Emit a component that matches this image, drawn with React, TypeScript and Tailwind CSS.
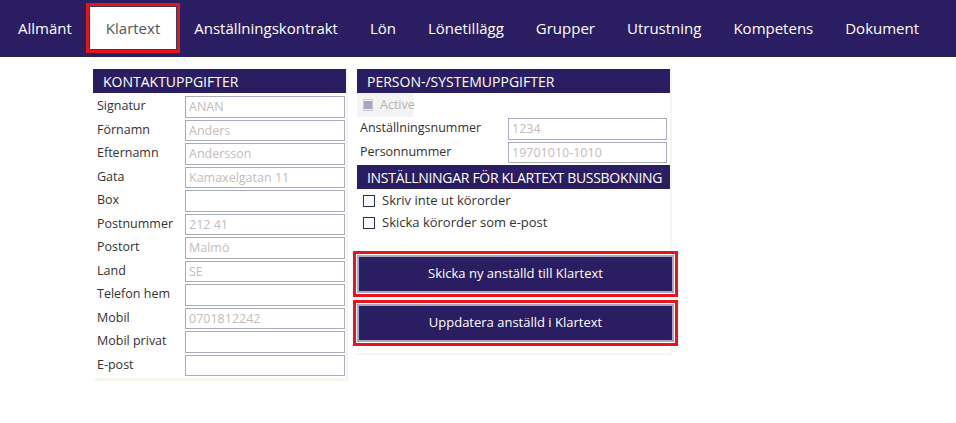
import React from 'react';

const NAV = '#2b1d61';

const tabs = [
  'Allmänt',
  'Klartext',
  'Anställningskontrakt',
  'Lön',
  'Lönetillägg',
  'Grupper',
  'Utrustning',
  'Kompetens',
  'Dokument',
];

const contactRows: [string, string][] = [
  ['Signatur', 'ANAN'],
  ['Förnamn', 'Anders'],
  ['Efternamn', 'Andersson'],
  ['Gata', 'Kamaxelgatan 11'],
  ['Box', ''],
  ['Postnummer', '212 41'],
  ['Postort', 'Malmö'],
  ['Land', 'SE'],
  ['Telefon hem', ''],
  ['Mobil', '0701812242'],
  ['Mobil privat', ''],
  ['E-post', ''],
];

const Field: React.FC<{ value: string; className?: string }> = ({ value, className = '' }) => (
  <div
    className={`h-[21.5px] border border-[#a9adbb] bg-white pl-[3px] text-[12.5px] leading-[19px] text-[#c4bcbc] ${className}`}
  >
    {value}
  </div>
);

const Check: React.FC<{ label: string }> = ({ label }) => (
  <div className="flex h-[22px] items-center pl-[6px]">
    <span className="h-[12px] w-[12px] border border-[#2e2d52] bg-white" />
    <span className="ml-[7px] text-[13px] text-[#333]">{label}</span>
  </div>
);

export default function App() {
  return (
    <div
      className="min-h-[423px] w-[956px] bg-white"
      style={{ fontFamily: '"Open Sans", "Noto Sans", sans-serif' }}
    >
      {/* top tabs */}
      <div className="flex h-[57px] items-start pl-[2px] pt-[6px]" style={{ background: NAV }}>
        {tabs.map((t) => {
          const active = t === 'Klartext';
          return (
            <div
              key={t}
              className={
                active
                  ? 'ml-[1px] mr-[1px] flex h-[44px] items-center border border-[#3a3a5a] bg-white px-[16px] text-[15px] text-[#555] outline-[3px] outline-solid outline-[#e8141c] outline-offset-0'
                  : 'flex h-[44px] items-center px-[16px] text-[15px] text-white'
              }
            >
              {t}
            </div>
          );
        })}
      </div>

      <div className="flex items-start pl-[93px] pt-[12px]">
        {/* KONTAKTUPPGIFTER */}
        <div className="w-[255px] border-r-[2px] border-b-[3px] border-[#f6f6ee] pb-[1px]">
          <div
            className="flex h-[24px] items-center pl-[10px] text-[14px] text-white"
            style={{ background: NAV }}
          >
            KONTAKTUPPGIFTER
          </div>
          <div className="pt-[2px]">
            {contactRows.map(([label, value]) => (
              <div key={label} className="flex h-[23.5px] items-center">
                <div className="w-[92px] pl-[4px] text-[12.5px] text-[#333]">{label}</div>
                <Field value={value} className="w-[160px]" />
              </div>
            ))}
          </div>
        </div>

        {/* PERSON-/SYSTEMUPPGIFTER */}
        <div className="ml-[9px] w-[315px] border-r-[2px] border-b-[2px] border-[#f6f6ee] pb-[11px]">
          <div
            className="flex h-[24px] items-center pl-[10px] text-[14px] text-white"
            style={{ background: NAV }}
          >
            PERSON-/SYSTEMUPPGIFTER
          </div>
          <div className="flex h-[24px] w-[56px] items-center bg-[#f3f3f3] pl-[6px]">
            <span className="flex h-[12px] w-[12px] items-center justify-center border border-[#c8c8d0] bg-white">
              <span className="h-[8px] w-[8px] bg-[#aaa6c4]" />
            </span>
            <span className="ml-[7px] text-[12.5px] text-[#b4b4b4]">Active</span>
          </div>
          <div className="flex h-[23.5px] items-center">
            <div className="w-[151px] pl-[3px] text-[12.5px] text-[#333]">Anställningsnummer</div>
            <Field value="1234" className="w-[159px]" />
          </div>
          <div className="flex h-[23.5px] items-center">
            <div className="w-[151px] pl-[3px] text-[12.5px] text-[#333]">Personnummer</div>
            <Field value="19701010-1010" className="w-[159px]" />
          </div>
          <div
            className="mt-[1px] flex h-[24px] items-center whitespace-nowrap pl-[10px] text-[14px] tracking-[-0.3px] text-white"
            style={{ background: NAV }}
          >
            INSTÄLLNINGAR FÖR KLARTEXT BUSSBOKNING
          </div>
          <div className="pt-[1px]">
            <Check label="Skriv inte ut körorder" />
            <Check label="Skicka körorder som e-post" />
          </div>

          <div className="mt-[21px] flex flex-col gap-[11px]">
            <button
              className="h-[38px] w-[317px] border-[2px] border-[#a8a8c0] text-[13px] text-white outline-[3px] outline-solid outline-[#e8141c] outline-offset-[1px]"
              style={{ background: NAV }}
            >
              Skicka ny anställd till Klartext
            </button>
            <button
              className="h-[38px] w-[317px] border-[2px] border-[#a8a8c0] text-[13px] text-white outline-[3px] outline-solid outline-[#e8141c] outline-offset-[1px]"
              style={{ background: NAV }}
            >
              Uppdatera anställd i Klartext
            </button>
          </div>
        </div>
      </div>
    </div>
  );
}
